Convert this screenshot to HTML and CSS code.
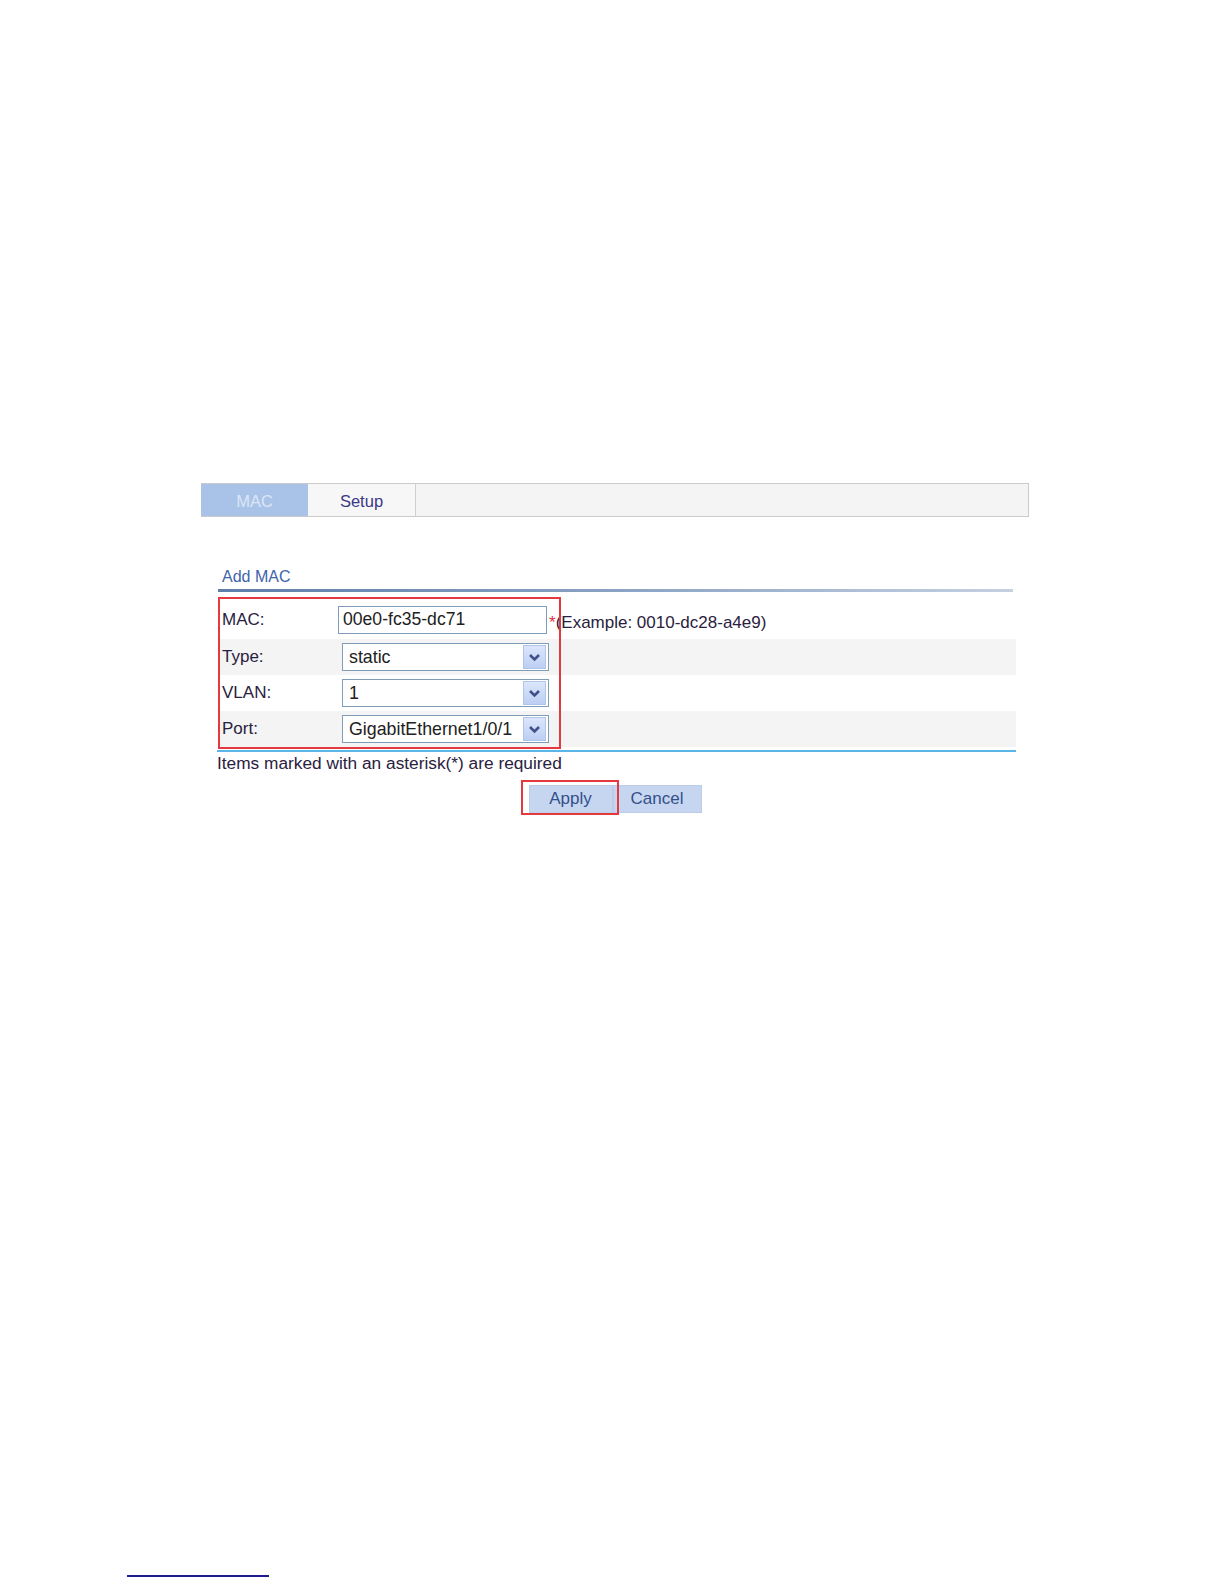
FILE: index.html
```html
<!DOCTYPE html>

<html>

<head>
    <title>Add MAC</title>
    <meta charset="utf-8">

    <link rel="stylesheet" href="styles.css">
</head>

<body>
    <div class="page">
        <div class="tabs">
            <div class="tab tab-active">MAC</div>
            <div class="tab">Setup</div>
        </div>

        <form class="panel">
            <div class="panel-title">Add MAC</div>
            <div class="title-rule"></div>

            <div class="rows">
                <div class="row row-first">
                    <label class="label" for="mac">MAC:</label>
                    <input class="text-input" type="text" id="mac" value="00e0-fc35-dc71">
                    <span class="hint"><span class="star">*</span>(Example: 0010-dc28-a4e9)</span>
                </div>
                <div class="row row-alt">
                    <span class="label">Type:</span>
                    <div class="select">
                        <span class="select-text">static</span>
                        <span class="select-btn">
                            <svg width="13" height="9" viewBox="0 0 13 9"><path d="M2 2 L6.5 6.5 L11 2" fill="none" stroke="#40508a" stroke-width="2.6"/></svg>
                        </span>
                    </div>
                </div>
                <div class="row">
                    <span class="label">VLAN:</span>
                    <div class="select">
                        <span class="select-text">1</span>
                        <span class="select-btn">
                            <svg width="13" height="9" viewBox="0 0 13 9"><path d="M2 2 L6.5 6.5 L11 2" fill="none" stroke="#40508a" stroke-width="2.6"/></svg>
                        </span>
                    </div>
                </div>
                <div class="row row-alt">
                    <span class="label">Port:</span>
                    <div class="select">
                        <span class="select-text">GigabitEthernet1/0/1</span>
                        <span class="select-btn">
                            <svg width="13" height="9" viewBox="0 0 13 9"><path d="M2 2 L6.5 6.5 L11 2" fill="none" stroke="#40508a" stroke-width="2.6"/></svg>
                        </span>
                    </div>
                </div>

                <!-- annotation frame drawn over the fields -->
                <div class="mark mark-fields"></div>
            </div>

            <div class="note">Items marked with an asterisk(*) are required</div>

            <div class="buttons">
                <span class="btn-wrap">
                    <button type="button" class="btn">Apply</button>
                    <span class="mark mark-apply"></span>
                </span>
                <button type="button" class="btn btn-cancel">Cancel</button>
            </div>
        </form>
    </div>

    <div class="foot-rule"></div>
</body>

</html>
```

FILE: styles.css
```css
body {
    margin: 0;
    padding: 0;
    font-family: "Liberation Sans", Arial, sans-serif;
    font-size: 17px;
    color: #2a2140;
    background: #fff;
}

.page {
    padding: 483px 0 0 201px;
}

/* tab strip */
.tabs {
    display: flex;
    width: 828px;
    height: 34px;
    box-sizing: border-box;
    border: 1px solid #cbcbcb;
    border-left: none;
    background: #f4f4f4;
}

.tab {
    width: 107px;
    display: flex;
    align-items: center;
    justify-content: center;
    padding-top: 2px;
    font-size: 16.5px;
    color: #3b3886;
    border-right: 1px solid #d0d0d0;
    background: #f7f7f7;
}

.tab-active {
    background: #a9c3e8;
    color: #dce6f6;
    border-right: none;
}

/* form panel */
.panel {
    margin: 49px 0 0 17px;
    width: 798px;
}

.panel-title {
    font-size: 16px;
    line-height: 20px;
    color: #3e63ab;
    padding: 1px 0 2px 4px;
}

.title-rule {
    width: 795px;
    height: 3px;
    background: linear-gradient(to right, #5d7eab, #8aa2c4 50%, #c5d1e1);
}

.rows {
    position: relative;
    margin-top: 6px;
}

.row {
    display: flex;
    align-items: center;
    height: 36px;
}

.row-first {
    height: 41px;
    padding-top: 2px;
    box-sizing: border-box;
}

.row-alt {
    background: #f4f4f4;
}

.label {
    width: 116px;
    padding-left: 4px;
}

.text-input {
    width: 209px;
    height: 28px;
    box-sizing: border-box;
    margin: 0;
    padding: 0 4px;
    border: 1px solid #7f9db9;
    font-family: inherit;
    font-size: 17.6px;
    color: #222;
}

.hint {
    padding-left: 2px;
    margin-top: 6px;
}

.star {
    color: #e0304a;
}

/* drop-down look */
.select {
    display: flex;
    align-items: center;
    width: 207px;
    height: 28px;
    box-sizing: border-box;
    margin-left: 4px;
    padding: 2px;
    border: 1px solid #7f9db9;
    background: #fff;
}

.select-text {
    flex: 1;
    padding-left: 4px;
    font-size: 17.8px;
    color: #222;
    white-space: nowrap;
}

.select-btn {
    display: flex;
    align-items: center;
    justify-content: center;
    width: 21px;
    height: 22px;
    border: 1px solid #b1c5ea;
    background: linear-gradient(#dbe6fb, #bccff3);
}

/* red annotation frames */
.mark {
    position: absolute;
    border: 2px solid #e43a3f;
    pointer-events: none;
}

.mark-fields {
    top: -1px;
    left: 0;
    width: 339px;
    height: 148px;
}

.note {
    margin-top: 3px;
    padding-top: 1px;
    border-top: 2px solid #5cb5e7;
    line-height: 20px;
    font-size: 17.3px;
    margin-left: -1px;
}

.buttons {
    display: flex;
    justify-content: center;
    margin-top: 12px;
    padding-right: 4px;
}

.btn-wrap {
    position: relative;
    display: flex;
}

.btn {
    width: 84px;
    height: 28px;
    border: 1px solid #bccdea;
    background: #c6d6f1;
    font-family: inherit;
    font-size: 17px;
    color: #34508a;
    padding: 0;
}

.btn-cancel {
    width: 89px;
}

.mark-apply {
    top: -5px;
    left: -8px;
    right: -6px;
    bottom: -2px;
}

.foot-rule {
    margin: 762px 0 0 127px;
    width: 142px;
    height: 2px;
    background: #1e1e8c;
}
```
